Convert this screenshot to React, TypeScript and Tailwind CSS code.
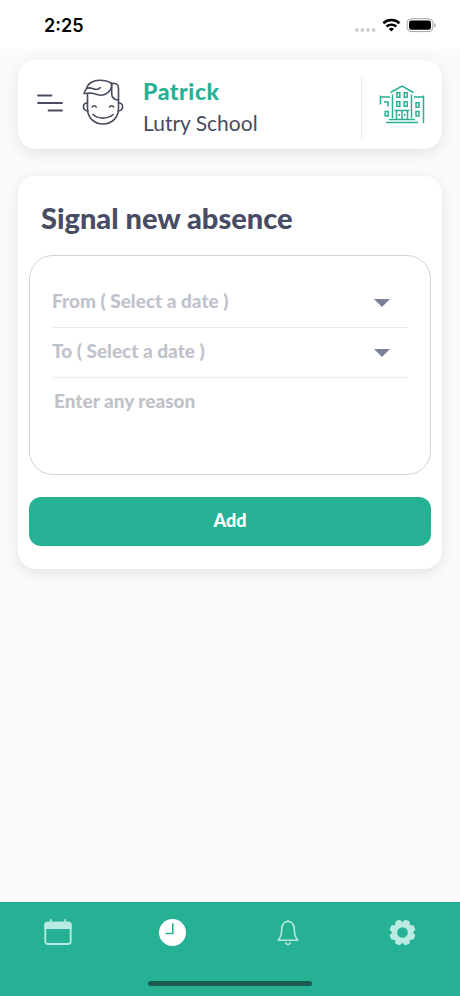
import type { ReactNode } from "react";

function StatusBar() {
  return (
    <div className="flex h-[49px] items-center justify-between bg-white pr-[24px] pl-[44px] text-black">
      <span className="pt-[2px] font-['Inter',sans-serif] text-[18px] leading-[24px] font-semibold">2:25</span>
      <svg className="h-[16px] w-[82px]" viewBox="0 0 82 16" fill="none">
        <g fill="#cfcfcf">
          <circle cx="2.8" cy="13" r="2" />
          <circle cx="8.4" cy="13" r="2" />
          <circle cx="14" cy="13" r="2" />
          <circle cx="19.6" cy="13" r="2" />
        </g>
        <path d="M29.3 6.2a12 12 0 0 1 16.2 0" stroke="#000" strokeWidth="2.6" />
        <path d="M32.5 9.5a7.3 7.3 0 0 1 9.8 0" stroke="#000" strokeWidth="2.4" />
        <path d="M37.4 14.6l-2.6-2.7a3.8 3.8 0 0 1 5.2 0z" fill="#000" />
        <rect x="53.2" y="1.8" width="25.6" height="12.8" rx="4" stroke="#a3a3a3" strokeWidth="1" />
        <rect x="55" y="3.6" width="22" height="9.2" rx="2.4" fill="#000" />
        <path d="M80.2 6v4.4c.9-.4 1.4-1.2 1.4-2.2s-.5-1.8-1.4-2.2z" fill="#999" />
      </svg>
    </div>
  );
}

function BoyIcon() {
  return (
    <svg
      className="h-[46px] w-[42px]"
      viewBox="0 0 42 46"
      fill="none"
      stroke="#474b5e"
      strokeWidth="1.6"
      strokeLinecap="round"
      strokeLinejoin="round"
    >
      <path d="M5.500 15v14.500C5.500 38.500 12 45 21 45s15.500-6.500 15.500-15.500V21" />
      <path d="M5.500 24c-5.500-.8-5.500 8.300.4 8M36.500 24c5.500-.8 5.500 8.300-.4 8" />
      <path d="M2 14.500C2.500 12 3.500 10.500 4.700 9.500 5.500 4.500 11 1.200 18 1.200c4.500 0 8.500 1.200 11.200 3C31 10.500 25 16.200 18.500 16.200c-3.800 0-5.500-1.500-8.500-2-2.500-.4-5.300.3-8 .3z" />
      <path d="M4.700 9.500c3.800-2 5.800 1 9.300 1 2 0 3.500-.7 4.400-1.900" />
      <path d="M29.200 4.200c5-.2 7.300 1 7.300 5V21c-4.700-.3-6.800-3.200-6.800-6.500V5" />
      <path d="M10.200 28c.7-1.700 3.300-1.700 4 0M27.600 28c.7-1.700 3.300-1.700 4 0" />
      <path d="M11 35.500c5 4.800 15 4.800 20 0" />
    </svg>
  );
}

function SchoolIcon() {
  return (
    <svg className="h-[40px] w-[46px]" viewBox="0 0 46 40" fill="none" stroke="#27b194" strokeWidth="1.5">
      <path d="M11.500 8.500L23 2l11.500 6.500" />
      <path d="M13.500 10.500V34M32.500 10.500V34" />
      <path d="M1.500 11.500v9M1 13h10M5 18h4v4.500M44.500 11.500V39M35 13h10" />
      <path d="M17.800 8.800h3v4.500h-3zM25.200 8.800h3v4.500h-3zM17.800 17.800h3v4.500h-3zM25.200 17.800h3v4.500h-3zM37 18.800h3v4.500h-3zM37 27.500h3V32h-3zM6.200 27.500h3V32h-3z" />
      <path d="M15.500 26.500h15M17.500 26.500V35M28.500 26.500V35M23 27v8M20.300 30v2M25.700 30v2" />
      <path d="M10 35.500h26M7 38.500h32" />
    </svg>
  );
}

function Header() {
  return (
    <header className="mx-[18px] mt-[11px] flex h-[89px] items-start rounded-[18px] bg-white pt-[16px] shadow-[0_4px_14px_rgba(0,0,0,0.09)]">
      <button type="button" aria-label="Menu" className="mt-[17px] ml-[18px]">
        <svg
          className="h-[20px] w-[28px]"
          viewBox="0 0 28 20"
          stroke="#474b63"
          strokeWidth="1.8"
          strokeLinecap="round"
        >
          <path d="M2 2.500h13.500M2 10h24M12.500 17.500H26" />
        </svg>
      </button>
      <div className="mt-[3px] ml-[18px]">
        <BoyIcon />
      </div>
      <div className="ml-[19px] flex-1 font-['Lato',sans-serif]">
        <p className="text-[23px] leading-[31px] font-black tracking-wide text-[#27b194]">Patrick</p>
        <p className="text-[21px] leading-[31px] text-[#474b5e]">Lutry School</p>
      </div>
      <div className="h-[64px] border-l border-[#ececec] pt-[8px] pr-[17px] pl-[17px]">
        <SchoolIcon />
      </div>
    </header>
  );
}

function DateSelect({ name, label }: { name: string; label: string }) {
  return (
    <div className="flex h-[50px] items-center border-b border-[#ececec] pr-[18px]">
      <select
        name={name}
        aria-label={label}
        className="h-full flex-1 appearance-none bg-transparent pb-[2px] text-[19px] font-black text-[#bfc2cc] outline-none"
      >
        <option>{label}</option>
      </select>
      <svg className="pointer-events-none h-[8px] w-[16px]" viewBox="0 0 16 8" fill="#7b809a">
        <path d="M0 0h16L8 8z" />
      </svg>
    </div>
  );
}

function AbsenceForm() {
  return (
    <form className="mx-[18px] mt-[27px] rounded-[18px] bg-white px-[11px] pt-[24px] pb-[23px] font-['Lato',sans-serif] shadow-[0_4px_14px_rgba(0,0,0,0.09)]">
      <h1 className="pl-[12px] text-[29px] leading-[36px] font-black text-[#474b63]">Signal new absence</h1>
      <div className="mt-[19px] rounded-[24px] border border-[#d3d3d5] px-[22px] pt-[22px] pb-[16px]">
        <DateSelect name="from" label="From ( Select a date )" />
        <DateSelect name="to" label="To ( Select a date )" />
        <textarea
          name="reason"
          aria-label="Enter any reason"
          placeholder="Enter any reason"
          className="block h-[80px] w-full resize-none pt-[11px] pl-[2px] text-[19px] leading-[24px] font-black text-[#474b63] outline-none placeholder:text-[#bfc2c8]"
        />
      </div>
      <button
        type="button"
        className="mt-[22px] h-[49px] w-full rounded-[12px] bg-[#27b194] pb-[2px] text-[18px] font-black text-white"
      >
        Add
      </button>
    </form>
  );
}

function NavButton({ label, children }: { label: string; children: ReactNode }) {
  return (
    <button type="button" aria-label={label} className="flex flex-1 justify-center">
      <svg className="size-[30px]" viewBox="0 0 30 30" fill="none">
        {children}
      </svg>
    </button>
  );
}

const teeth = [22.5, 67.5, 112.5, 157.5, 202.5, 247.5, 292.5, 337.5];

function BottomNav() {
  return (
    <footer className="mt-auto flex h-[94px] flex-col items-center justify-between bg-[#27b194] pt-[16px] pb-[10px]">
      <nav className="flex w-full">
        <NavButton label="Calendar">
          <rect x="2.3" y="4.7" width="25.4" height="21.3" rx="2.5" stroke="#b9ebe2" strokeWidth="1.8" />
          <path
            d="M1.400 11V7c0-2 1-3.200 3-3.200h1.800a1.600 1.600 0 0 0 3.200 0h11.200a1.600 1.600 0 0 0 3.200 0h1.800c2 0 3 1.200 3 3.200v4z"
            fill="#b9ebe2"
          />
          <path d="M7.800 2v2M22.200 2v2" stroke="#b9ebe2" strokeWidth="1.8" strokeLinecap="round" />
        </NavButton>
        <NavButton label="Absences">
          <circle cx="14.5" cy="14.5" r="13.5" fill="#fff" />
          <path d="M14.800 5.800v9.700H8.200" stroke="#27b194" strokeWidth="1.6" strokeLinecap="round" />
        </NavButton>
        <NavButton label="Notifications">
          <g stroke="#b9ebe2" strokeWidth="1.5" strokeLinecap="round" strokeLinejoin="round">
            <path d="M15 3.300c-4.300.7-6.300 3.500-6.300 7.700 0 5.500-1 8.500-3.500 11.200h19.600c-2.500-2.700-3.500-5.700-3.500-11.200 0-4.200-2-7-6.300-7.700zM15 3.300V2.300" />
            <path d="M12.700 24.700c.4 2.400 4.200 2.400 4.600 0" />
          </g>
        </NavButton>
        <NavButton label="Settings">
          <circle cx="14.5" cy="14.5" r="7.9" stroke="#b9ebe2" strokeWidth="5.2" />
          <g fill="#b9ebe2">
            {teeth.map((angle) => (
              <path
                key={angle}
                d="M10.300 6l1.200-3.200c.3-1 .9-1.300 1.600-1.300h2.800c.7 0 1.300.3 1.600 1.300L18.700 6z"
                transform={`rotate(${angle} 14.5 14.5)`}
              />
            ))}
          </g>
        </NavButton>
      </nav>
      <div className="h-[5px] w-[164px] rounded-full bg-[#1b5b51]" />
    </footer>
  );
}

export default function App() {
  return (
    <div className="flex min-h-screen flex-col bg-[#fafafa]">
      <StatusBar />
      <Header />
      <AbsenceForm />
      <BottomNav />
    </div>
  );
}
